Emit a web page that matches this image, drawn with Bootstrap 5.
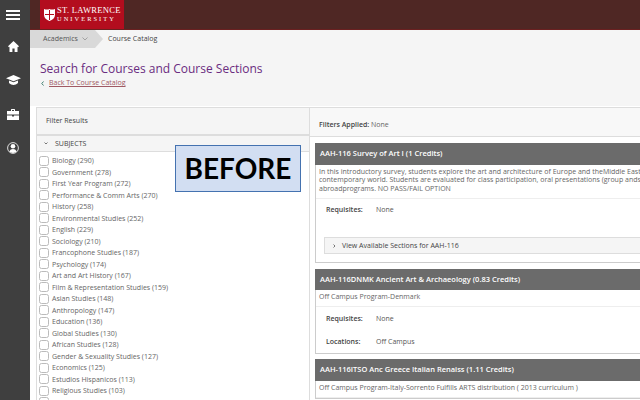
<!DOCTYPE html>
<html lang="en">
<head>
    <meta charset="UTF-8">
    <meta name="viewport" content="width=device-width, initial-scale=1.0">
    <title>Search for Courses and Course Sections</title>
    <link href="https://cdn.jsdelivr.net/npm/bootstrap@5.3.2/dist/css/bootstrap.min.css" rel="stylesheet">
    <style>
        html, body { height: 400px; overflow: hidden; }
        body { font-family: "Open Sans", sans-serif; font-size: 7px; line-height: 11.5px; color: #555; background: #fff; }
        .side-rail { width: 30px; background: #3f3f3f; padding-right: 4px; }
        .rail-btn { height: 34px; width: 26px; }
        .rail-btn.first { height: 29px; }
        .top-strip { height: 30px; background: #4f2724; border-bottom: 1px solid #6a2020; padding-left: 10px; }
        .logo-box { width: 84px; height: 29px; background: #b30d1e; color: #fff; padding-left: 4px; gap: 2px; }
        .logo-words { font-family: "Liberation Serif", serif; line-height: 7.5px; }
        .logo-top { font-size: 8.6px; letter-spacing: .25px; white-space: nowrap; }
        .logo-bot { font-size: 6.4px; letter-spacing: 2.05px; white-space: nowrap; }
        .head-zone { background: #f5f5f5; height: 76px; }
        .crumb-row { height: 18px; }
        .crumb-main { background: #d9d9d9; width: 65px; height: 18px; padding-left: 13px; position: relative; color: #555; }
        .crumb-main::after { content: ""; position: absolute; left: 65px; top: 0; border-left: 8px solid #d9d9d9; border-top: 9px solid transparent; border-bottom: 9px solid transparent; }
        .crumb-next { margin-left: 13px; color: #444; }
        .page-title { font-size: 12px; line-height: 16px; color: #6a2c80; margin: 13px 0 0 10px; font-weight: 400; }
        .back-row { margin: 0 0 0 11px; height: 12px; gap: 5px; }
        .back-row a { color: #a05a64; }
        .work-zone { padding: 1px 0 0 6px; height: 294px; }
        .filter-pane { width: 274px; border: 1px solid #ddd; border-bottom: 0; flex: none; }
        .filter-head { height: 28px; background: #f5f5f5; border-bottom: 2px solid #ddd; padding-left: 9px; color: #444; }
        .subj-head { height: 16px; background: #f5f5f5; border-bottom: 1px solid #ddd; padding-left: 7px; gap: 7px; color: #444; }
        .subj-list { padding: 3px 0 0 2px; }
        .subj-row { height: 11.5px; gap: 3px; white-space: nowrap; color: #666; }
        .fake-check { width: 10px; height: 10px; border: 1px solid #bbb; border-radius: 2.5px; background: #fff; flex: none; }
        .result-pane { flex: 1; min-width: 0; border-top: 1px solid #ddd; }
        .applied-row { height: 29px; background: #f8f8f8; border-bottom: 1px solid #ddd; padding: 5px 0 0 9px; color: #666; }
        .applied-row b { color: #444; font-weight: 600; }
        .course-stack { padding: 6px 0 0 5px; gap: 5.5px; width: 345px; }
        .course-box { border: 1px solid #ccc; border-top: 0; flex: none; }
        .course-top { background: #6b6b6b; color: #fff; font-weight: 600; height: 21.5px; padding-left: 5px; font-size: 7.5px; margin: 0 -1px; }
        .course-text { padding: 3px 3px 4px 3px; border-bottom: 1px solid #eee; white-space: nowrap; overflow: hidden; color: #666; line-height: 8.7px; }
        .req-row { height: 23px; padding-left: 10px; }
        .req-name { width: 50px; color: #444; font-weight: 600; }
        .sections-bar { margin: 15.5px 0 8px 8px; height: 17px; background: #f5f5f5; border: 1px solid #ddd; padding-left: 8px; gap: 6px; color: #444; }
        .before-tag { position: absolute; left: 175px; top: 145px; width: 126px; height: 47px; background: #d2deF2; border: 1px solid #4472b0; color: #000; font-family: "Lato", sans-serif; font-weight: 700; font-size: 28px; line-height: 45px; text-align: center; }
    </style>
</head>
<body>
<div class="d-flex">
    <!-- Left rail -->
    <div class="side-rail d-flex flex-column align-items-center vh-100">
        <div class="rail-btn first d-flex align-items-center justify-content-center">
            <svg width="14" height="10" viewBox="0 0 14 10"><path fill="#fff" d="M0 0h14v2H0zM0 4h14v2H0zM0 8h14v2H0z"/></svg>
        </div>
        <div class="rail-btn d-flex align-items-center justify-content-center">
            <svg width="11" height="11" viewBox="0 0 11 11"><path fill="#fff" d="M5.5 0 11 5.2 10 6.2 9.5 5.8V11H6.6V7.4H4.4V11H1.5V5.8L1 6.2 0 5.2z"/></svg>
        </div>
        <div class="rail-btn d-flex align-items-center justify-content-center">
            <svg width="15" height="10" viewBox="0 0 15 10"><path fill="#fff" d="M7.5 0 15 3.2 7.5 6.2 0 3.2z"/><path fill="#fff" d="M3 5.4 7.5 7.2 12 5.4V8c-1.2 1.3-3 2-4.5 2S4.2 9.3 3 8z"/></svg>
        </div>
        <div class="rail-btn d-flex align-items-center justify-content-center">
            <svg width="12" height="11" viewBox="0 0 12 11"><path fill="#fff" d="M4 2V.6C4 .3 4.3 0 4.6 0h2.8c.3 0 .6.3.6.6V2h4v3.6H0V2zM5 1v1h2V1zM0 6.4h5V7.4h2v-1h5V11H0z"/></svg>
        </div>
        <div class="rail-btn d-flex align-items-center justify-content-center">
            <svg width="12" height="12" viewBox="0 0 12 12"><circle cx="6" cy="6" r="5.4" fill="none" stroke="#ddd" stroke-width="1"/><circle cx="6" cy="4.3" r="2.3" fill="#fff"/><path fill="#fff" d="M2.4 9.6C3 7.8 4.4 7 6 7s3 .8 3.6 2.6C8.6 10.6 7.3 11 6 11s-2.6-.4-3.6-1.4z"/></svg>
        </div>
    </div>

    <div class="flex-grow-1" style="min-width:0">
        <!-- Top strip -->
        <div class="top-strip">
            <div class="logo-box d-flex align-items-center">
                <svg width="11" height="12" viewBox="0 0 11 12"><path fill="#fff" d="M0 0c2 .7 4 .7 5.5 0C7 .7 9 .7 11 0v6c0 3-2.5 5-5.5 6C2.500 11 0 9 0 6z"/><path fill="#b30d1e" d="M5 1h1v4h4v1H6v5H5V6H1V5h4z"/></svg>
                <div class="logo-words">
                    <div class="logo-top">ST. LAWRENCE</div>
                    <div class="logo-bot">UNIVERSITY</div>
                </div>
            </div>
        </div>

        <!-- Breadcrumb and title -->
        <div class="head-zone">
            <div class="crumb-row d-flex align-items-center">
                <div class="crumb-main d-flex align-items-center gap-1">Academics
                    <svg width="6" height="4" viewBox="0 0 6 4"><path fill="none" stroke="#888" stroke-width=".7" d="M.5.5 3 3 5.500.5"/></svg>
                </div>
                <div class="crumb-next">Course Catalog</div>
            </div>
            <div class="page-title">Search for Courses and Course Sections</div>
            <div class="back-row d-flex align-items-center">
                <svg width="3" height="5" viewBox="0 0 3 5"><path fill="none" stroke="#3f7f70" stroke-width="1" d="M2.500.5.800 2.500l1.700 2"/></svg>
                <a href="#">Back To Course Catalog</a>
            </div>
        </div>

        <div class="work-zone d-flex">
            <!-- Filters -->
            <div class="filter-pane">
                <div class="filter-head d-flex align-items-center">Filter Results</div>
                <div class="subj-head d-flex align-items-center">
                    <svg width="4" height="3" viewBox="0 0 4 3"><path fill="none" stroke="#555" stroke-width=".8" d="M.5.5 2 2 3.500.5"/></svg>
                    <span>SUBJECTS</span>
                </div>
                <div class="subj-list" id="subjList"></div>
            </div>

            <!-- Results -->
            <div class="result-pane">
                <div class="applied-row d-flex align-items-center"><span><b>Filters Applied:</b> None</span></div>
                <div class="course-stack d-flex flex-column">
                    <div class="course-box">
                        <div class="course-top d-flex align-items-center">AAH-116 Survey of Art I (1 Credits)</div>
                        <div class="course-text">In this introductory survey, students explore the art and architecture of Europe and theMiddle East from<br>contemporary world. Students are evaluated for class participation, oral presentations (group andsolo)<br>abroadprograms. NO PASS/FAIL OPTION</div>
                        <div class="req-row d-flex align-items-center"><span class="req-name">Requisites:</span><span>None</span></div>
                        <div class="sections-bar d-flex align-items-center">
                            <svg width="3" height="4" viewBox="0 0 3 4"><path fill="none" stroke="#555" stroke-width=".8" d="M.5.5 2 2 .5 3.500"/></svg>
                            <span>View Available Sections for AAH-116</span>
                        </div>
                    </div>
                    <div class="course-box">
                        <div class="course-top d-flex align-items-center">AAH-116DNMK Ancient Art &amp; Archaeology (0.83 Credits)</div>
                        <div class="course-text">Off Campus Program-Denmark</div>
                        <div class="req-row d-flex align-items-center"><span class="req-name">Requisites:</span><span>None</span></div>
                        <div class="req-row d-flex align-items-center"><span class="req-name">Locations:</span><span>Off Campus</span></div>
                    </div>
                    <div class="course-box">
                        <div class="course-top d-flex align-items-center">AAH-116ITSO Anc Greece Italian Renaiss (1.11 Credits)</div>
                        <div class="course-text">Off Campus Program-Italy-Sorrento Fulfills ARTS distribution ( 2013 curriculum )</div>
                    </div>
                </div>
            </div>
        </div>
    </div>
</div>

<div class="before-tag">BEFORE</div>

<script src="https://cdn.jsdelivr.net/npm/bootstrap@5.3.2/dist/js/bootstrap.bundle.min.js"></script>
<script>
    const subjects = ['Biology (290)', 'Government (278)', 'First Year Program (272)', 'Performance & Comm Arts (270)',
        'History (258)', 'Environmental Studies (252)', 'English (229)', 'Sociology (210)', 'Francophone Studies (187)',
        'Psychology (174)', 'Art and Art History (167)', 'Film & Representation Studies (159)', 'Asian Studies (148)',
        'Anthropology (147)', 'Education (136)', 'Global Studies (130)', 'African Studies (128)',
        'Gender & Sexuality Studies (127)', 'Economics (125)', 'Estudios Hispanicos (113)', 'Religious Studies (103)', 'Geology (100)'];
    const list = document.getElementById('subjList');
    subjects.forEach(name => {
        const row = document.createElement('div');
        row.className = 'subj-row d-flex align-items-center';
        const box = document.createElement('span');
        box.className = 'fake-check';
        const label = document.createElement('span');
        label.textContent = name;
        row.appendChild(box);
        row.appendChild(label);
        list.appendChild(row);
    });
</script>
</body>
</html>
